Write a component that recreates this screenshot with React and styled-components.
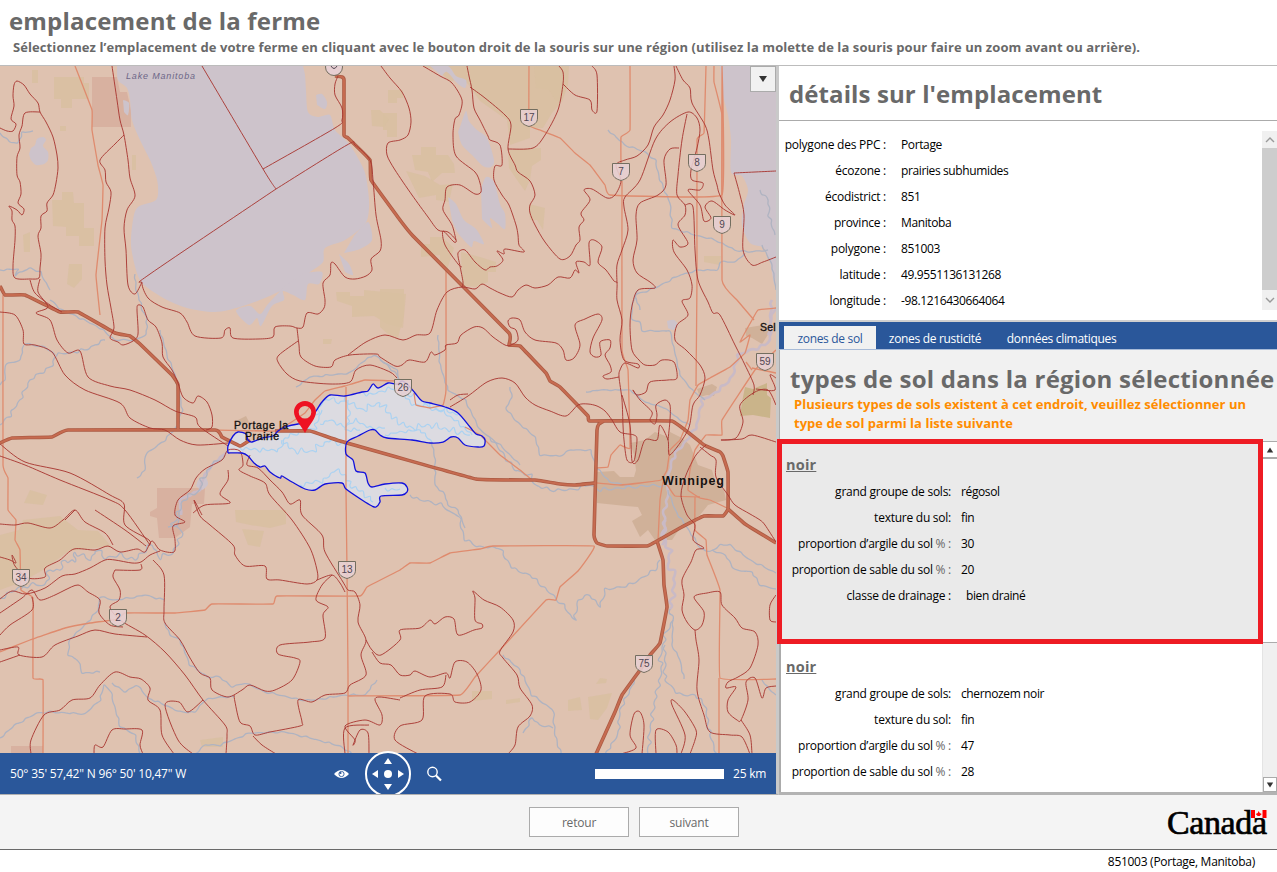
import React from "react";
import styled, { createGlobalStyle } from "styled-components";

const GlobalStyle = createGlobalStyle`
  * { box-sizing: border-box; }
  html, body { margin: 0; padding: 0; background: #fff; overflow: hidden; }
  body { font-family: "Open Sans", "Noto Sans", sans-serif; font-size: 12px; color: #000; }
`;

const Page = styled.div`
  width: 1277px;
  height: 872px;
  display: flex;
  flex-direction: column;
  background: #fff;
`;

const Header = styled.header`
  height: 66px;
  flex: none;
  padding: 5px 0 0 9px;
  border-bottom: 1px solid #bcbcbc;
  color: #696969;
`;

const Title = styled.h1`
  margin: 0;
  height: 32px;
  line-height: 32px;
  font-size: 24px;
  font-weight: 700;
  letter-spacing: ${(p) => p.$spacing ?? "0.18px"};
  color: #696969;
  white-space: nowrap;
`;

const Instruction = styled.p`
  margin: 1px 0 0 4px;
  font-size: 13px;
  line-height: 19px;
  font-weight: 700;
  letter-spacing: 0.09px;
  white-space: nowrap;
`;

const Body = styled.main`
  display: flex;
  height: 729px;
  flex: none;
`;

const MapPane = styled.section`
  width: 779px;
  flex: none;
  display: flex;
  flex-direction: column;
  position: relative;
  border-right: 3px solid #c9c9c9;
  border-bottom: 2px solid #b0b0b0;
`;

const MapSvg = styled.svg`
  display: block;
  width: 776px;
  height: 687px;
  flex: none;
`;

const LayerButton = styled.button`
  position: absolute;
  top: 0;
  right: 0;
  width: 26px;
  height: 26px;
  padding: 0;
  display: flex;
  align-items: center;
  justify-content: center;
  border: 1px solid #ababab;
  background: #f1f1f1;
`;

const MapBar = styled.div`
  flex: 1;
  display: flex;
  align-items: center;
  background: #2a579a;
  color: #fff;
  padding: 0 0 0 10px;
`;

const Coordinates = styled.span`
  width: 324px;
  flex: none;
  letter-spacing: -0.21px;
  white-space: nowrap;
`;

const MapTools = styled.div`
  display: flex;
  align-items: center;
  width: 261px;
  flex: none;
`;

const Compass = styled.svg`
  width: 48px;
  height: 44px;
  margin: -3px 15px 0 14px;
`;

const ScaleBar = styled.div`
  width: 129px;
  height: 10px;
  flex: none;
  background: #fff;
  margin-right: 9px;
`;

const ScaleLabel = styled.span`
  letter-spacing: -0.2px;
  white-space: nowrap;
`;

const Side = styled.aside`
  flex: 1;
  min-width: 0;
  display: flex;
  flex-direction: column;
`;

const DetailsHeader = styled.div`
  height: 55px;
  flex: none;
  padding: 12px 0 0 10px;
  border-bottom: 1px solid #ababab;
`;

const Details = styled.div`
  height: 201px;
  flex: none;
  display: flex;
  justify-content: space-between;
  padding-top: 10px;
  border-bottom: 2px solid #cfcfcf;
`;

const FieldList = styled.div`
  display: flex;
  flex-direction: column;
  padding-top: ${(p) => p.$top ?? 0}px;
`;

const Field = styled.div`
  display: flex;
  height: 26px;
  line-height: 26px;
  white-space: nowrap;
  letter-spacing: -0.25px;
`;

const Label = styled.span`
  width: ${(p) => p.$width}px;
  text-align: right;
  margin-right: ${(p) => p.$gap}px;
`;

const Value = styled.span`
  letter-spacing: -0.38px;
`;

const Unit = styled.span`
  color: #666;
`;

const ScrollTrack = styled.div`
  width: 15px;
  height: 179px;
  display: flex;
  flex-direction: column;
  background: #f0f0f0;
`;

const ScrollArrow = styled.div`
  height: ${(p) => p.$height}px;
  flex: none;
  display: flex;
  align-items: center;
  justify-content: center;
`;

const ScrollThumb = styled.div`
  flex: 1;
  background: #cdcdcd;
`;

const Tabs = styled.nav`
  height: 28px;
  flex: none;
  display: flex;
  padding: 4px 0 0 5px;
  background: #2a579a;
  border-bottom: 1px solid #a8bbd8;
`;

const Tab = styled.button`
  width: ${(p) => p.$width}px;
  padding: 2px 0 0;
  border: 0;
  font: inherit;
  letter-spacing: -0.32px;
  white-space: nowrap;
  background: ${(p) => (p.$active ? "#f1f1f1" : "transparent")};
  color: ${(p) => (p.$active ? "#2a579a" : "#fff")};
`;

const SoilHeader = styled.div`
  height: 92px;
  flex: none;
  padding: 13px 0 0 10px;
  background: #f1f1f1;
  border-left: 1px solid #ababab;
  border-bottom: 1px solid #ababab;
`;

const Warning = styled.p`
  margin: 0 0 0 4px;
  width: 475px;
  font-size: 13px;
  font-weight: 700;
  line-height: 19px;
  letter-spacing: 0.03px;
  color: #ff8c00;
`;

const SoilList = styled.div`
  flex: 1;
  min-height: 0;
  display: flex;
  border-bottom: 3px solid #b3b3b3;
`;

const SoilCards = styled.div`
  width: 483px;
  border-left: 2px solid #ababab;
`;

const SoilCard = styled.article`
  position: relative;
  height: ${(p) => p.$height}px;
  overflow: hidden;
  padding: ${(p) => (p.$selected ? "10px 0 0 4px" : "12px 0 0 5px")};
  margin: ${(p) => (p.$selected ? "-3px 0 0 -4px" : "0")};
  width: ${(p) => (p.$selected ? "486px" : "auto")};
  border: ${(p) => (p.$selected ? "5px solid #ee1c24" : "0")};
  background: ${(p) => (p.$selected ? "#eaeaea" : "#fff")};
`;

const SoilName = styled.h2`
  margin: 0 0 3px;
  font-size: 14.5px;
  line-height: 22px;
  letter-spacing: 0.2px;
  text-decoration: underline;
  color: #696969;
`;

const SoilScroll = styled.div`
  flex: 1;
  display: flex;
  flex-direction: column;
  background: #f0f0f0;
  border-left: 1px solid #e4e4e4;
`;

const SoilThumb = styled.div`
  height: 186px;
  background: #fff;
  border-top: 2px solid #ababab;
  border-bottom: 1px solid #ababab;
  margin-bottom: auto;
`;

const SoilArrow = styled(ScrollArrow)`
  background: #fff;
  border: ${(p) => (p.$down ? "1px solid #ababab" : "0")};
`;

const Footer = styled.footer`
  height: 55px;
  flex: none;
  position: relative;
  display: flex;
  justify-content: center;
  align-items: center;
  gap: 10px;
  padding-right: 9px;
  background: #f4f4f4;
  border-bottom: 1px solid #696969;
`;

const FooterButton = styled.button`
  width: 100px;
  height: 30px;
  border: 1px solid #ababab;
  background: #fdfdfd;
  font: inherit;
  color: #696969;
  letter-spacing: -0.2px;
`;

const Wordmark = styled.svg`
  position: absolute;
  right: 4px;
  top: 8px;
  width: 110px;
  height: 44px;
`;

const StatusBar = styled.div`
  flex: 1;
  padding: 3px 22px 0 0;
  text-align: right;
  line-height: 17px;
  letter-spacing: -0.28px;
`;

/* ---------- map data: "x,y x,y …" in map units ---------- */

const parse = (s) => s.trim().split(/\s+/).map((p) => p.split(",").map(Number));

const smooth = (s, k = 7) => {
  const p = parse(s);
  let d = `M${p[0]}`;
  for (let i = 0; i < p.length - 1; i++) {
    const a = p[i - 1] || p[i];
    const b = p[i];
    const c = p[i + 1];
    const e = p[i + 2] || c;
    d += `C${b[0] + (c[0] - a[0]) / k},${b[1] + (c[1] - a[1]) / k} ${c[0] - (e[0] - b[0]) / k},${c[1] - (e[1] - b[1]) / k} ${c[0]},${c[1]}`;
  }
  return d;
};

const meander = (s, amp = 2, step = 4) => {
  const p = parse(s);
  const out = [];
  let n = 0;
  for (let i = 0; i < p.length - 1; i++) {
    const [x1, y1] = p[i];
    const [x2, y2] = p[i + 1];
    const len = Math.hypot(x2 - x1, y2 - y1) || 1;
    const parts = Math.max(1, Math.round(len / step));
    for (let j = 0; j < parts; j++, n++) {
      const off = amp * Math.sin(n * 2.1) * (0.6 + 0.4 * Math.cos(n * 0.9));
      const t = j / parts;
      out.push(`${x1 + (x2 - x1) * t - ((y2 - y1) / len) * off},${y1 + (y2 - y1) * t + ((x2 - x1) / len) * off}`);
    }
  }
  out.push(p[p.length - 1].join(","));
  return smooth(out.join(" "), 5);
};

const LAKES = [
  "117,66 118,80 127,88 130,100 132,120 140,140 150,160 156,176 158,187 156,200 138,207 133,220 131,245 136,270 143,284 165,299 187,308 215,312 240,307 265,298 290,286 310,272 323,262 325,248 345,240 365,224 369,208 368,190 364,170 350,145 335,130 330,115 318,117 308,112 306,90 305,75 303,66",
  "720,66 723,95 728,115 731,140 731,172 742,176 748,190 744,205 742,225 750,243 764,248 770,262 776,275 776,66",
  "31,148 35,145 37,139 43,137 46,140 43,146 48,152 48,160 44,164 36,165 31,160 29,154",
  "316,95 322,94 327,102 325,109 317,105",
  "461,124 466,111 469,121 477,130 487,138 494,160 491,167 483,166 472,155 462,145 458,132",
  "448,197 456,204 464,220 476,229 484,244 474,241 471,247 458,233 452,220",
  "481,189 486,177 494,182 500,204 505,214 505,229 498,224 490,218 492,228 482,219",
  "430,66 448,66 456,76 466,80 465,88 457,83 447,72 442,76",
  "354,236 368,222 372,240 360,249 344,253",
  "339,254 349,264 353,275 345,272",
  "304,273 322,272 319,284 308,284 305,300 293,295 283,291 284,300 272,306 261,326 257,318 249,325 236,311 250,306 260,314 268,304 285,286",
  "667,321 674,320 678,325 673,330 668,328",
  "198,480 205,477 208,484 202,490 196,486",
];

const POND = "123,100 129,103 128,115 124,112";

const FIELDS = [
  "54,77 84,77 84,83 89,83 89,99 72,99 72,108 61,108 61,99 54,99",
  "52,200 62,200 62,192 73,192 74,203 84,203 84,228 94,228 94,246 79,246 79,236 66,236 66,227 53,226",
  "69,264 82,264 82,279 74,288 67,284", "132,155 136,155 136,170 132,170", "32,70 38,70 38,83 32,83",
  "23,235 30,232 30,252 24,252", "388,90 403,90 403,98 397,98 397,103 388,103", "383,113 397,113 397,137 387,137 387,130 383,130",
  "421,66 563,66 563,84 559,105 552,113 543,128 530,128 530,138 510,145 507,120 480,101 468,84 460,78 450,82 438,70",
  "412,155 421,155 421,147 436,147 436,155 448,155 454,164 455,173 442,173 432,182 428,172 415,170",
  "406,171 425,176 440,185 453,184 449,202 436,200 436,195 419,198",
  "421,244 430,244 430,237 442,237 454,248 447,270 440,266 440,255 421,257",
  "534,67 569,66 568,85 562,102 555,100 549,90 536,88",
  "508,150 541,148 541,160 532,166 530,180 525,191 517,180 509,168",
  "529,204 545,208 543,230 537,220 530,220",
  "461,252 480,257 496,262 496,272 488,272 488,282 477,287 462,286",
  "336,292 350,292 350,296 364,296 364,290 406,294 403,328 387,324 374,316 352,317 352,306 337,301",
  "371,110 380,110 389,119 384,127 372,126", "380,289 404,289 404,314 398,338 389,335 380,327",
  "0,590 0,535 19,530 23,520 60,516 78,530 98,531 111,546 69,551 43,570 22,582",
  "30,490 47,495 43,505 24,503", "235,510 286,510 286,524 270,528 250,525 236,522", "242,529 264,531 260,547 248,545",
  "568,700 580,697 582,710 568,711", "588,697 612,693 607,708 598,720 590,719", "472,691 492,691 492,699 472,701",
  "600,678 607,679 606,683 596,684", "704,256 721,256 720,265 704,262", "323,339 332,339 331,344 323,344",
  "200,740 223,737 223,747 202,747", "60,126 66,126 66,131 60,131", "506,700 520,698 520,702 506,704",
];

const OLIVE = "745,387 753,389 767,383 767,395 771,398 770,418 753,415 740,416 742,402";

const RESERVES = [
  "92,77 117,77 120,92 127,92 131,110 131,127 92,127",
  "157,488 205,488 204,504 192,504 190,527 175,538 159,538 157,518 150,516 150,512 157,508",
  "11,746 43,746 43,754 11,754",
];

const URBAN = [
  "597,472 614,471 620,477 634,477 636,470 634,455 630,443 645,440 655,432 668,437 670,432 682,438 690,445 698,465 712,470 716,484 724,490 726,500 708,505 700,515 680,528 672,540 655,540 648,530 640,537 632,521 642,515 638,507 626,506 597,503",
  "745,328 763,325 769,333 762,344 752,338 746,336", "697,389 712,384 717,387 714,396 707,395 700,397",
  "238,420 246,416 249,422 243,426",
];

const BOUNDARIES = [
  "0,128 7,131 13,131 16,124 11,119 14,106 13,96 14,85 17,81 24,85 30,94 38,103 40,112 46,122 53,137 57,155 58,168 56,183 53,195 47,203 47,211 41,216 41,228 38,236 41,254 40,268 39,278 30,279 15,278 13,266 15,240 15,226 12,220 12,211 9,206 17,210 22,215 24,209 18,203 21,194 20,182 17,175 17,157 20,148 19,135 22,126 25,113 40,112",
  "112,66 117,100 120,120 124,135 128,160 130,178 135,196 127,210 124,228 126,250 128,285 135,294 142,282",
  "124,135 115,144 100,160 105,170 106,182 111,192 109,208 105,228 105,260 107,285 111,308 114,328 110,338 118,342 123,345 133,341 138,334 137,310 138,305 143,307 148,320 156,327 162,343 163,357 172,370 178,383 183,397 193,403 198,396 207,402 212,415 212,427 206,430",
  "202,66 263,169 276,189", "263,169 335,128 342,120 342,108 335,95 335,84 338,76",
  "276,189 347,145 355,145 370,160 373,180 376,215 381,240 380,251 371,259 372,270 366,276 355,279 345,277 335,264 331,263 330,275 323,283 325,300 324,308 318,314 307,313 303,327 297,328 290,326 275,327 273,337 258,339 233,338 230,328 225,330 221,338 195,336 187,322 180,313 162,307 148,298 142,283 150,274 276,189",
  "297,328 299,345 301,357 315,366 331,367 335,360 350,355 376,354 380,357 395,366 402,365 409,360 425,362 431,352 435,355 445,350 446,345 457,343 461,335 474,327 483,328 493,337 505,345 511,345 518,340 516,330 510,327 508,321 512,318 520,320 525,332 535,340 556,343 563,350 566,360 574,358 580,345 575,325 585,319 598,314 602,320 593,338 590,352 595,357 601,355 600,342 610,340 610,348 605,355 610,365 611,372 603,376 607,379 619,377",
  "298,341 279,355 278,362 287,374 300,381 330,384 350,382 356,370 370,365 390,372 397,378",
  "381,66 390,78 402,92 409,108 411,122 408,135 400,140 388,143 387,155 395,170 412,195 428,217 438,230 448,232 456,240 454,242 443,231 445,245 458,264 462,267",
  "348,355 366,342 385,335 403,340 416,335 430,333 437,310 447,292 462,287 475,289 482,284 490,288 500,293 512,297 518,290 526,285 535,288 548,285 558,277 570,278 575,270 579,273 576,262 584,262 590,265 589,243 594,240 602,247 598,262 606,270 614,281 617,283 617,300 622,320 620,340 624,360 638,364 638,368 625,363 620,370 619,377 622,400 623,425 624,440 627,460 634,461 637,440 634,435 620,432 612,420 605,411 597,406 588,404 578,405 566,416 550,411 535,405 525,397 515,383 502,378 487,382 468,396 450,407",
  "423,66 440,76 452,83 462,100 459,115 455,119 453,135 456,156 475,172 480,183 481,192 475,194 460,185 447,187 445,200 443,210 452,225 456,240",
  "467,66 469,76 472,90 474,108 480,120 488,136 490,140 500,145 502,165 495,166 494,180 502,195 509,205 516,225 518,235 519,245 524,252 505,249 504,254 497,251 503,260 497,266 490,267 485,270 475,262 465,250 458,253 460,266 463,282 462,287",
  "470,87 485,98 505,115 511,125 508,149 515,165 518,172 530,181 535,195 530,205 530,213 535,225 545,242 560,259 570,256 576,245 580,240 579,227 584,220 581,213 590,200 584,190 592,189 607,198 615,195 621,181 616,165 625,160 637,156 648,145 654,127 663,115 670,100 675,80 674,66",
  "508,149 533,148 545,135 558,110 563,84 563,72 559,66", "563,84 575,95 590,100 592,110 597,111 597,75 592,66",
  "676,66 683,80 690,88 692,103 705,125 709,140 713,170 717,185 719,193 725,205 735,215 725,210 712,201 705,207 711,218 704,221 700,205 688,190 700,190 703,183 692,180 691,170 697,148 700,130 697,118 688,112 670,122 655,140 640,180 625,197 624,207 628,230 622,250 617,265 617,283",
  "687,114 682,140 678,175 677,195 685,205 685,215 678,225 688,243 680,247 673,240 674,252 687,270 692,285 690,298 682,301 688,315 677,325 675,340 686,350 700,365 705,378 700,395 693,405 688,430 670,455 668,440 660,425 657,440 645,440 638,460 632,461 630,425 622,395",
  "685,205 693,207 695,250 698,280 708,302 713,313 720,315 735,345 745,365 754,385 753,395",
  "679,148 670,149 664,160 666,185 658,195 640,203 636,215 637,240 633,260 637,273 650,282 655,288 638,290 632,306 630,325 632,350 639,360 645,365 655,365 662,360 674,362 677,378 668,380 650,382 646,392 637,395 633,390 640,400 652,412 650,420 655,424 657,415 656,405 665,400 670,405 670,420 668,440",
  "734,173 740,195 744,215 743,250 752,265 763,262 776,257", "734,173 776,171", "450,400 458,395 468,394",
  "756,389 775,390 770,375 776,378", "776,405 768,390 755,392 740,405 743,422 736,438 721,440 742,439 752,435 776,442",
  "706,445 696,455 686,475 681,495 687,515 695,525 693,540 704,548 696,550 691,562 682,580 684,595 682,610 687,622 695,630 702,625 704,612 694,597 707,593 720,592 722,605 735,618 742,628 755,632 758,645 750,668 738,677 728,682 726,688 736,687 728,700 728,712 737,720 741,720 748,700 746,682 755,678 762,698 766,688 776,686",
  "695,630 696,640 699,660 697,690 704,715 710,732 730,735 742,737 750,754", "700,447 710,455 716,460 716,477 728,495 735,505 750,514 760,520 765,525 776,542",
  "741,720 750,735 752,754", "690,754 695,740 696,730 685,712 673,700 672,705 685,735 681,754", "656,754 656,730 668,732 676,745 677,754",
  "621,754 636,748 630,735 634,714 640,712 644,725 642,754", "776,595 770,605 770,620 776,622",
  "0,557 10,560 16,563 12,555 15,566 28,578 45,577 45,568 60,560 74,549 95,550 108,546 120,552 137,549 145,552 152,541 160,550 174,552 175,540 173,526 185,522 175,515 178,500 190,490 196,478 205,469 222,460 228,450 240,451 243,465 239,470 250,476 265,483 270,495 292,520 310,548 317,570 317,580 307,584 280,580 267,579 265,566 245,566 235,555 233,545 210,525 200,516 194,500 202,515",
  "250,455 247,465 258,468 270,480 282,492 290,504 300,500 302,515 322,535 325,552 343,582 348,590 355,592 360,605 358,622 366,640 361,655 366,675 350,685 345,693 325,695 312,702 298,700 302,722 300,726 270,732 255,735 250,726 240,722 235,702 234,695",
  "366,640 372,650 381,655 400,640 400,630 420,628 430,620 435,624 445,617 454,619 458,635 474,630 482,628 482,624 475,620 475,598 473,591 484,600 500,607 513,620 513,632 500,651 503,658 517,675 520,688 532,705 530,716 518,727 515,745 508,754",
  "372,652 380,663 391,665 400,675 410,675 415,671 430,677 446,673 450,678 455,662 467,662 477,674 481,690 470,702 455,702 450,694 425,696 422,720 400,726 395,740 418,754",
  "400,700 380,697 375,700 382,715 380,725 365,720 345,726 355,740 353,745 360,730 368,733 369,754", "446,675 442,687 420,690 400,698",
  "317,580 332,575 340,583 345,592", "332,575 322,585 316,600 328,607 323,615 325,638 310,642 280,645 278,654 295,658 300,662 292,680 275,690 265,691 250,685 242,690 228,697 212,690 210,678 200,673 190,658 180,640 165,623 164,610 164,575 153,560",
  "0,599 12,591 26,594 45,588 62,576 75,574 90,568 105,560 115,560 132,563 141,562 150,555 160,551",
  "115,570 140,570 141,564", "115,570 113,577 120,590 119,600 110,607 120,620 145,635 165,652 185,675 203,700 225,725 227,735 226,754",
  "0,613 22,598 32,590 40,600 55,595 65,590 78,585 88,592 100,600 99,613 110,625 123,627",
  "0,650 18,647 19,655 42,657 55,645 78,636 95,630 115,634 147,637", "0,662 20,655", "0,635 10,625 32,610 32,597",
  "31,754 31,740 44,715 60,710 72,700 90,698 100,685 115,672 130,677 141,679 150,688 148,700 160,710 162,735 174,754",
  "94,754 95,745 103,747 112,730 125,729 142,730 140,745 143,754", "193,754 178,740 165,705 179,702 188,712 203,700",
  "276,754 262,745 253,736", "0,524 15,525 28,523 50,528 63,520 75,510 85,522 105,533 113,545", "75,510 65,520", "150,545 125,510 110,500 60,480 25,465 0,456",
  "95,510 125,530 146,546", "149,546 149,540 125,525 124,504 110,495 70,473 25,462 0,444",
  "0,312 15,315 23,330 24,344 35,345 52,352 65,375 85,390 120,403 130,418 150,428 165,430 180,440 197,445 228,443",
  "40,279 38,292 48,307 36,313 50,320 57,340 68,353 80,351 88,377 110,386 130,390 155,400 175,411 195,417 200,427 228,446", "30,280 35,293 50,305 62,312",
  "228,470 228,480 220,494 230,503 205,505 193,513", "345,754 345,728 369,725",
];

const MINOR_ROADS = [
  "75,66 92,110 92,130 98,165 103,185 102,220 96,275 100,315", "3,295 3,465 8,478 8,510 16,520 15,540 20,550 21,590 33,598 33,678 43,680 43,754",
  "0,652 30,640 65,628 90,623 118,619 125,613 175,613 205,610 212,604 273,604 277,596 360,596 367,587 400,570 410,563 430,563 450,553 480,549 493,546 594,546 578,571 560,587 556,600 546,600 500,650 475,677 460,695 348,696",
  "346,387 346,490 347,570 348,675 348,754", "215,430 275,431 290,423 305,413 315,400 325,391 345,386 365,380 395,381",
  "529,66 529,125 540,130 560,138 575,153 590,165 605,185 610,195 722,195 722,66 722,280 737,300 754,320", "622,181 622,350 628,370 630,448 620,445 611,455 608,467 597,468",
  "630,66 630,130 621,137 621,170", "706,66 704,133 697,140 697,278 696,386", "714,66 714,82 722,115 722,195",
  "446,270 446,390 443,405 430,408 416,405 414,393", "465,427 480,435 500,455 520,470 532,480",
  "597,483 620,485 640,483 661,480 667,470 670,450 680,440 688,420 690,400 698,385 710,378 730,367 745,353 750,335 740,342 752,320 758,310 776,308",
  "776,350 755,370 722,420 722,435 706,435 695,450 690,470 688,490 700,498 710,500 727,508", "658,541 660,500 663,482 668,486 675,496 700,497",
  "695,497 695,530 706,540 707,555 720,590 720,678 776,679", "719,678 719,754", "752,368 776,373", "746,362 752,370",
];

const HIGHWAYS = [
  "335,76 342,77 344,80 344,135 348,138 370,160 371,180 400,220 413,236 509,333 509,345 520,346 546,373 550,381 560,387 588,416 590,421 672,421 704,445 720,452 723,456 728,472 728,509 723,516 704,516 680,528 657,541 647,546 607,546 597,543 594,535 597,430 599,424 604,421",
  "728,509 745,524 776,543", "595,483 575,485 560,484 535,480 476,479 340,441 310,431 275,431",
  "0,443 12,438 52,437 68,430 215,430 222,437 240,446 250,440", "178,430 178,385 172,375 140,344 130,336 115,333 78,312 60,312 25,295 5,295 0,286",
  "657,541 663,560 664,585 667,607 660,643 650,655 640,670 622,695 615,712 596,754",
];

const RIVERS = [
  ["0,598 15,590 28,585 45,585 50,570 60,570 65,560 75,562 75,552 90,560 97,550 105,558 120,555 135,560 145,550 152,545 160,558 172,553 180,540 182,530 172,525 180,510 183,500 200,490 202,480 212,465 225,455", 3],
  ["165,623 170,635 180,640 190,665 208,677 220,677 232,687 245,683 265,692 280,695 300,700 315,700 345,695 365,695 377,680", 1],
  ["180,510 178,525 168,527", 1], ["70,639 85,625 98,610 100,597 115,600 130,598 145,595 164,600", 1],
  ["0,738 15,725 37,713 50,712 85,714 100,700 104,685 110,690 117,715 120,726 135,735 140,754", 1],
  ["112,683 125,692 137,685 148,698 165,705 180,712 195,712 205,700 220,697 234,697", 1],
  ["70,639 68,655 78,660 82,673 100,672", 1], ["195,754 205,745 220,745 250,733 285,732 310,738 340,746 352,754", 1],
  ["135,274 136,290 140,300 142,310 147,318 146,335 135,340 115,340 100,328 80,318 62,310 50,300", 1],
  ["105,340 85,350 55,355 53,365 30,380 20,400 10,415 0,425", 2], ["24,345 20,360 5,365 5,380 0,385", 1],
  ["160,330 167,355 175,375 180,395 182,410 178,425 165,440 145,455 145,470 137,478", 1], ["55,355 45,347 25,344", 1],
  ["296,387 310,377 330,375 350,373 365,360 375,355 387,365 397,375 400,382", 1], ["0,270 18,269 15,275 30,268 40,272 50,290", 1],
  ["0,133 10,142 18,143 22,133 33,131", 1], ["28,579 20,590", 1],
  ["432,442 435,460 435,485 445,495 448,505 458,510 465,528", 1], ["380,360 397,370 400,384", 0.5],
  ["410,495 420,500 440,504 450,512 458,515 465,540 480,547 500,548 505,558 515,570 530,575 550,593 563,605 570,615 575,620 578,600 590,595 600,607 605,590 630,585 655,570 660,560", 2],
  ["490,437 500,450 515,470 530,475 535,485 550,490 570,490 590,485 600,490 620,488 645,486 665,485", 2.2],
  ["438,335 440,365 448,390 465,400 470,410 480,430 500,445 520,465", 0.8], ["510,387 512,397 506,408 515,420 535,437 540,455 560,456 570,450 590,450 597,468 610,482 630,486", 0.8],
  ["586,392 600,390 630,390 645,402 665,408 680,420 690,425", 0.6], ["638,290 632,305 632,320 640,322 642,331 670,331 680,375 692,390 705,400", 0.6],
  ["608,130 625,145 645,152 655,160 660,180 670,203 672,228 695,235 715,240 735,250 748,252 768,250", 1], ["640,310 635,295 655,288 680,275 700,270 718,270 720,262 735,262 745,253", 1],
  ["760,190 768,200 770,220 775,235", 2], ["762,245 772,265 776,290", 0.7],
  ["668,490 675,510 692,535 700,548 710,552 720,545 730,545 750,560 776,573", 1], ["712,550 725,555 735,570 752,572 760,585 776,589", 1],
  ["670,609 673,620 665,635 660,660 662,670 655,700 650,730 648,754", 2.4], ["673,620 672,645 680,660 684,679", 0.8], ["665,645 665,680 680,695 695,695 705,705 710,735 717,754", 2.2],
  ["637,675 630,690 620,710 618,735 605,754", 1.7], ["503,655 520,670 532,695 553,710 555,735 561,754", 1.2], ["553,728 540,725 532,718 528,725 523,733", 1.5], ["762,680 770,690 776,695", 0.7],
];

const CREEKS = [
  ["346,393 355,390 370,395 385,390 398,388 405,395 420,395 432,410 445,410 458,415", 2.5],
  ["348,400 360,410 380,403 395,420 410,428 430,425 450,430 470,435", 4],
  ["316,415 322,403 330,398 338,403 347,400", 3],
  ["240,448 260,450 280,450 285,438 300,432 315,428 322,410", 2.5],
  ["282,440 292,450 310,452 330,440 345,445 358,441", 4],
  ["300,485 325,480 335,470 345,475 350,485 362,492 373,502", 3],
  ["385,488 392,490 400,489", 3],
  ["320,424 330,420 345,427 355,420 370,428 385,428", 2],
  ["345,397 350,415 345,430 360,430", 2],
  ["405,395 412,405 425,405 440,410 455,420 472,435", 2],
  ["385,435 400,432 420,430 432,442", 1.5],
];

const WIDE_RIVERS = [
  ["772,300 770,320 770,340 765,345 738,355 733,375 725,385 712,395 702,400 697,425 687,440 678,450 672,460 668,480 668,497 664,510 665,530 662,545", 1.8],
  ["666,520 662,535 670,550 668,565 675,575 673,595 670,609", 3],
  ["768,335 772,315 776,308", 1], ["181,515 180,500 200,490 203,478 212,465 227,452", 0.8],
];

const SELECTION =
  "228,453 228,446 233,436 238,432 246,434 248,440 252,442 262,438 273,436 278,431 285,427 298,424 308,424 316,411 322,402 330,395 345,396 362,392 368,391 373,384 378,388 388,383 395,384 398,384 402,381 408,385 415,393 422,401 430,403 445,407 458,413 470,427 476,434 482,436 485,440 484,446 478,447 465,445 458,438 451,437 443,442 430,443 412,440 387,438 380,435 375,430 370,430 358,436 347,442 346,454 353,460 356,471 365,473 368,483 372,487 385,484 402,483 407,487 407,492 402,495 381,496 380,502 376,507 372,506 362,500 346,489 342,483 325,484 315,490 305,489 292,482 282,476 280,478 270,472 265,466 260,467 254,463 248,456 242,453 228,453";

const SHIELDS = [
  ["17", 529, 118], ["7", 621, 172], ["8", 697, 163], ["9", 722, 225], ["59", 765, 362],
  ["26", 403, 388], ["34", 21, 578], ["2", 118, 618], ["13", 347, 570], ["75", 644, 664],
];

function Shield({ label, x, y }) {
  return (
    <g transform={`translate(${x} ${y})`}>
      <path d="M-8.500,-8.500H8.500V0C8.500,5 5,7 0,8.500C-5,7 -8.500,5 -8.500,0Z" fill="#e7cfd2" fillOpacity="0.88" stroke="#736e60" strokeWidth="1" />
      <text y="3" textAnchor="middle" fontSize="10" fontFamily="Liberation Sans, sans-serif" fill="#514653">{label}</text>
    </g>
  );
}

function FarmMap() {
  return (
    <MapSvg viewBox="0 66 776 687" fill="none">
      <defs>
        <clipPath id="selection-clip">
          <path d={smooth(SELECTION) + "Z"} />
        </clipPath>
      </defs>
      <rect y="66" width="776" height="688" fill="#dfc2b0" />
      {FIELDS.map((s) => <polygon key={s} points={s} fill="#d8bfa0" fillOpacity="0.8" />)}
      {URBAN.map((s) => <polygon key={s} points={s} fill="#d0b199" />)}
      {RESERVES.map((s) => <polygon key={s} points={s} fill="#d8b1a0" />)}
      <polygon points={OLIVE} fill="#cab48a" />
      {LAKES.map((s) => <path key={s} d={smooth(s) + "Z"} fill="#cdc3cb" />)}
      <path d={smooth(POND) + "Z"} fill="#cdc3cb" />
      <g clipPath="url(#selection-clip)">
        <rect x="220" y="370" width="280" height="145" fill="#dcdbe1" />
      </g>
      <g strokeLinejoin="round">
        {WIDE_RIVERS.map(([s, a]) => <path key={s} d={meander(s, a)} stroke="#c9bac6" strokeWidth="2.6" />)}
        {RIVERS.map(([s, a]) => <path key={s} d={meander(s, a)} stroke="#afb3c1" strokeWidth="1.3" />)}
        <g clipPath="url(#selection-clip)">
          {CREEKS.map(([s, a]) => <path key={s} d={meander(s, a, 3)} stroke="#abd2f1" strokeWidth="1.2" />)}
        </g>
        {MINOR_ROADS.map((s) => <path key={s} d={smooth(s, 30)} stroke="#df8b6e" strokeWidth="1.3" />)}
        {HIGHWAYS.map((s) => <path key={s} d={smooth(s, 30)} stroke="#ac5b44" strokeWidth="3.6" />)}
        {HIGHWAYS.map((s) => <path key={s} d={smooth(s, 30)} stroke="#c66b50" strokeWidth="2" />)}
        <g stroke="#a83631" strokeOpacity="0.92" strokeWidth="1">
          {BOUNDARIES.map((s) => <path key={s} d={smooth(s)} />)}
        </g>
        <path d={smooth(SELECTION)} stroke="#1111dc" strokeWidth="1.3" />
      </g>
      <circle cx="334" cy="67" r="8.5" fill="#e7cfd2" stroke="#736e60" />
      <path d="M331,66q3,5 6,0" stroke="#514653" />
      {SHIELDS.map(([label, x, y]) => <Shield key={label} label={label} x={x} y={y} />)}
      <g fontFamily="Liberation Sans, sans-serif" fill="#151210">
        <text x="126" y="79" textLength="69" fontSize="9" fontStyle="italic" fill="#6c6687">Lake Manitoba</text>
        <g fontSize="10.5" stroke="#151210" strokeWidth="0.35">
          <text x="234" y="429" textLength="54">Portage la</text>
          <text x="245" y="440" textLength="34">Prairie</text>
          <text x="760" y="331" textLength="15.5">Sel</text>
        </g>
        <text x="662" y="485" textLength="62" fontSize="12.5" fontWeight="700">Winnipeg</text>
      </g>
      <path fillRule="evenodd" fill="#ee1122" d="M305,401C298.500,401 294,406 294,412C294,418 300,424 305,433C310,424 316,418 316,412C316,406 311.500,401 305,401ZM305,406A6.300,6.300 0 1 1 305,418.600A6.300,6.300 0 1 1 305,406Z" />
    </MapSvg>
  );
}

const Triangle = ({ d, size = 10, color = "#333" }) => (
  <svg width={size} height={size} viewBox="0 0 10 10"><path d={d} fill={color} /></svg>
);

const Chevron = ({ d }) => (
  <svg width="10" height="8" viewBox="0 0 10 8"><path d={d} fill="none" stroke="#9a9a9a" strokeWidth="1.4" /></svg>
);

const DETAILS = [
  ["polygone des PPC :", "Portage"], ["écozone :", "prairies subhumides"], ["écodistrict :", "851"],
  ["province :", "Manitoba"], ["polygone :", "851003"], ["latitude :", "49.9551136131268"], ["longitude :", "-98.1216430664064"],
];

function Soil({ selected, height, group, clay, sand, drainage }) {
  const rows = [
    ["grand groupe de sols:", "", group], ["texture du sol:", "", "fin"],
    ["proportion d’argile du sol ", "% :", clay], ["proportion de sable du sol ", "% :", sand],
  ];
  if (drainage) rows.push(["classe de drainage :", "", drainage]);
  return (
    <SoilCard $selected={selected} $height={height}>
      <SoilName>noir</SoilName>
      <FieldList>
        {rows.map(([label, unit, value], i) => (
          <Field key={label}>
            <Label $width={165} $gap={i === 4 ? 15 : 10}>{label}{unit && <Unit>{unit}</Unit>}</Label>
            <Value>{value}</Value>
          </Field>
        ))}
      </FieldList>
    </SoilCard>
  );
}

export default function App() {
  return (
    <Page>
      <GlobalStyle />
      <Header>
        <Title>emplacement de la ferme</Title>
        <Instruction>Sélectionnez l’emplacement de votre ferme en cliquant avec le bouton droit de la souris sur une région (utilisez la molette de la souris pour faire un zoom avant ou arrière).</Instruction>
      </Header>
      <Body>
        <MapPane>
          <FarmMap />
          <LayerButton><Triangle d="M1,2H9L5,8Z" /></LayerButton>
          <MapBar>
            <Coordinates>50° 35' 57,42" N 96° 50' 10,47" W</Coordinates>
            <MapTools>
              <svg width="15" height="10" viewBox="0 0 15 10">
                <path d="M0,5Q7.500,-3 15,5Q7.500,13 0,5Z" fill="#fff" />
                <circle cx="7.500" cy="5" r="2.600" fill="none" stroke="#2a579a" strokeWidth="0.900" />
                <circle cx="6.500" cy="4" r="1.100" fill="#2a579a" />
              </svg>
              <Compass viewBox="0 0 48 44">
                <circle cx="25" cy="24" r="22" fill="#2a579a" stroke="#fff" strokeWidth="2" />
                <circle cx="25" cy="24" r="4" fill="#fff" />
                <path d="M25,8L29,14H21ZM25,40L29,34H21ZM9,24L15,20V28ZM41,24L35,20V28Z" fill="#fff" />
              </Compass>
              <svg width="16" height="16" viewBox="0 0 16 16" fill="none" stroke="#fff">
                <circle cx="6.500" cy="6" r="4.700" strokeWidth="1.400" />
                <path d="M10,9.500L15,14.500" strokeWidth="2.200" />
              </svg>
            </MapTools>
            <ScaleBar />
            <ScaleLabel>25 km</ScaleLabel>
          </MapBar>
        </MapPane>
        <Side>
          <DetailsHeader><Title $spacing="0.1px">détails sur l'emplacement</Title></DetailsHeader>
          <Details>
            <FieldList $top={1}>
              {DETAILS.map(([label, value]) => (
                <Field key={label}><Label $width={107} $gap={15}>{label}</Label><Value>{value}</Value></Field>
              ))}
            </FieldList>
            <ScrollTrack>
              <ScrollArrow $height={17}><Chevron d="M1,6L5,2L9,6" /></ScrollArrow>
              <ScrollThumb />
              <ScrollArrow $height={20}><Chevron d="M1,2L5,6L9,2" /></ScrollArrow>
            </ScrollTrack>
          </Details>
          <Tabs>
            <Tab $width={92} $active>zones de sol</Tab>
            <Tab $width={118}>zones de rusticité</Tab>
            <Tab $width={135}>données climatiques</Tab>
          </Tabs>
          <SoilHeader>
            <Title $spacing="0.25px">types de sol dans la région sélectionnée</Title>
            <Warning>Plusieurs types de sols existent à cet endroit, veuillez sélectionner un type de sol parmi la liste suivante</Warning>
          </SoilHeader>
          <SoilList>
            <SoilCards>
              <Soil selected height={205} group="régosol" clay="30" sand="20" drainage="bien drainé" />
              <Soil height={147} group="chernozem noir" clay="47" sand="28" />
            </SoilCards>
            <SoilScroll>
              <SoilArrow $height={15}><Triangle size={8} d="M1,8H9L5,2Z" /></SoilArrow>
              <SoilThumb />
              <SoilArrow $height={15} $down><Triangle size={8} d="M1,2H9L5,8Z" /></SoilArrow>
            </SoilScroll>
          </SoilList>
        </Side>
      </Body>
      <Footer>
        <FooterButton>retour</FooterButton>
        <FooterButton>suivant</FooterButton>
        <Wordmark viewBox="0 0 110 44">
          <text x="4" y="31" fontSize="34" textLength="100" fontFamily="Liberation Serif, serif" stroke="#000" strokeWidth="0.700">Canada</text>
          <path d="M91.500,7h8v8h-8Z" fill="#f4f4f4" />
          <path d="M88,7h4v8h-4ZM99.500,7h4v8h-4Z" fill="#f00" />
          <path d="M95.700,8l1,2l2,1l-2,2h-2l-2,-2l2,-1Z" fill="#f00" />
        </Wordmark>
      </Footer>
      <StatusBar>851003 (Portage, Manitoba)</StatusBar>
    </Page>
  );
}
